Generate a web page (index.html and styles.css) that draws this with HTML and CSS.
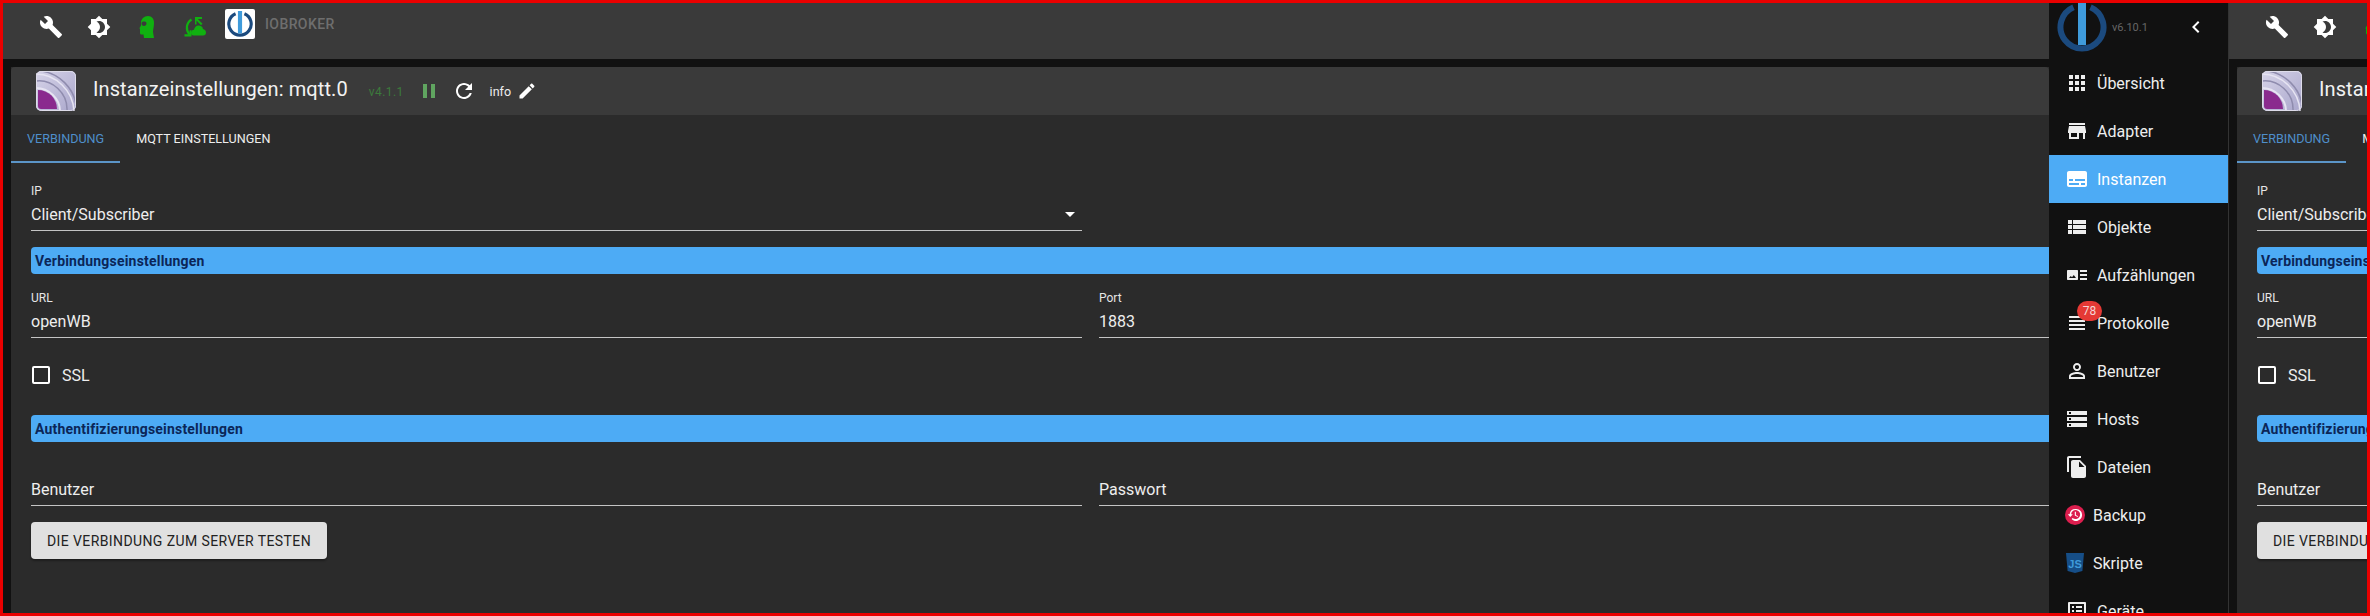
FILE: index.html
```html
<!DOCTYPE html>
<html lang="de">
<head>
    <meta charset="UTF-8">
    <meta name="viewport" content="width=device-width, initial-scale=1.0">
    <link rel="stylesheet" href="styles.css">
    <title>Instanzeinstellungen: mqtt.0</title>
</head>
<body>
  <svg class="sprite" aria-hidden="true">
    <defs>
      <linearGradient id="g-adapter" x1="0" y1="0" x2="1" y2="1">
        <stop offset="0" stop-color="#d6d3e8"/>
        <stop offset="1" stop-color="#aaa7cc"/>
      </linearGradient>
    </defs>
    <symbol id="i-build" viewBox="0 0 24 24"><path d="M22.7 19l-9.1-9.1c.9-2.3.4-5-1.5-6.9-2-2-5-2.4-7.4-1.3L9 6 6 9 1.6 4.7C.4 7.1.9 10.1 2.9 12.1c1.9 1.9 4.6 2.4 6.9 1.5l9.1 9.1c.4.4 1 .4 1.4 0l2.3-2.3c.5-.4.5-1.1.1-1.4z"/></symbol>
    <symbol id="i-theme" viewBox="0 0 24 24"><path d="M20 8.69V4h-4.69L12 .69 8.69 4H4v4.69L.69 12 4 15.31V20h4.69L12 23.31 15.31 20H20v-4.69L23.31 12 20 8.69zM12 18c-.89 0-1.74-.2-2.5-.55C11.56 16.5 13 14.42 13 12s-1.44-4.5-3.5-5.45C10.26 6.2 11.11 6 12 6c3.31 0 6 2.69 6 6s-2.69 6-6 6z"/></symbol>
    <symbol id="i-head" viewBox="0 0 24 24"><path fill-rule="evenodd" d="M13 1c4 0 6 3 6 7 0 4-1 6-1 9l1 6H9l-.5-3.5H6.500c-1 0-1.500-.7-1.500-1.500v-3.500L4.500 13 6 10.500V8c0-4 3-7 7-7zM6.500 8.500c0 1.500 1 2.500 2.500 2.500s2.500-1 2.500-2.500-1-2-2.500-2-2.500.5-2.500 2z"/></symbol>
    <symbol id="i-expert" viewBox="0 0 24 24">
      <path d="M8.500 4.500C3 8 2.500 15 6.500 19.500" fill="none" stroke="currentColor" stroke-width="2.200"/>
      <path d="M1.500 21.500h7v-6.500l-2 .5v3.800H1.500zM12 2h7v2h-4.200l4.700 4.700-1.500 1.500L13.500 5.500V9.500H12z"/>
      <path d="M15.500 10.500c2.500 0 4.300 1.500 4.500 3.500 1.700.4 3 1.700 3 3.500 0 1.700-1 3-3 3H10.500c-1.500 0-2.500-1.200-2.500-2.700 0-1.500 1.200-2.800 3-3 .3-2.300 2.200-4.300 4.500-4.300z"/>
    </symbol>
    <symbol id="i-pause" viewBox="0 0 24 24"><path d="M6 19h4V5H6v14zm8-14v14h4V5h-4z"/></symbol>
    <symbol id="i-refresh" viewBox="0 0 24 24"><path d="M17.65 6.35C16.2 4.9 14.21 4 12 4c-4.42 0-7.99 3.58-7.99 8s3.57 8 7.99 8c3.73 0 6.84-2.55 7.73-6h-2.08c-.82 2.33-3.04 4-5.65 4-3.31 0-6-2.69-6-6s2.69-6 6-6c1.66 0 3.14.69 4.22 1.78L13 11h7V4l-2.35 2.35z"/></symbol>
    <symbol id="i-edit" viewBox="0 0 24 24"><path d="M3 17.25V21h3.75L17.81 9.94l-3.75-3.75L3 17.25zM20.71 7.04c.39-.39.39-1.02 0-1.41l-2.34-2.34c-.39-.39-1.02-.39-1.41 0l-1.83 1.83 3.75 3.750 1.83-1.83z"/></symbol>
    <symbol id="i-drop" viewBox="0 0 24 24"><path d="M7 10l5 5 5-5z"/></symbol>
    <symbol id="i-logo" viewBox="0 0 50 50">
      <path d="M16.500 5.200A21.500 21.500 0 1 0 33.500 5.200" fill="none" stroke="#1b4a7e" stroke-width="6"/>
      <rect x="21" y="0" width="8" height="43" fill="#3f9bdb"/>
    </symbol>
    <symbol id="i-adapter" viewBox="0 0 40 40">
      <rect width="40" height="40" rx="5" fill="url(#g-adapter)"/>
      <path d="M0 10C16 8 32 22 31 40" fill="none" stroke="#8f8cae" stroke-width="1.500"/>
      <path d="M6 0C24 3 37 17 40 33" fill="none" stroke="#8f8cae" stroke-width="1.500"/>
      <path d="M0 3C20 3 37 20 38 40" fill="none" stroke="#e6e4f2" stroke-width="1.500"/>
      <path d="M0 17C13 17 24 28 24 40" fill="none" stroke="#e6e4f2" stroke-width="2"/>
      <path d="M2 19a19 19 0 0 1 19 19H5a3 3 0 0 1-3-3z" fill="#8a2a8e"/>
      <rect x=".500" y=".500" width="39" height="39" rx="5" fill="none" stroke="#dedcea"/>
    </symbol>
  </svg>

  <main class="page">
    <section class="pane">
      <header class="topbar">
        <span class="top-btn"><svg class="icon"><use href="#i-build"/></svg></span>
        <span class="top-btn"><svg class="icon"><use href="#i-theme"/></svg></span>
        <span class="top-btn green"><svg class="icon"><use href="#i-head"/></svg></span>
        <span class="top-btn green"><svg class="icon"><use href="#i-expert"/></svg></span>
        <span class="top-logo"><svg class="top-logo-img"><use href="#i-logo"/></svg></span>
        <span class="top-name">IOBROKER</span>
      </header>
      <div class="panel">
        <div class="panel-head">
          <svg class="adapter-icon"><use href="#i-adapter"/></svg>
          <h1 class="title">Instanzeinstellungen: mqtt.0</h1>
          <span class="version">v4.1.1</span>
          <svg class="icon pause"><use href="#i-pause"/></svg>
          <svg class="icon refresh"><use href="#i-refresh"/></svg>
          <span class="info">info</span>
          <svg class="icon edit"><use href="#i-edit"/></svg>
        </div>
        <div class="tabs">
          <span class="tab active">Verbindung</span>
          <span class="tab">MQTT Einstellungen</span>
        </div>
        <form class="form">
          <div class="cols">
            <div class="field">
              <label class="field-label">IP</label>
              <div class="field-value">Client/Subscriber<svg class="icon drop"><use href="#i-drop"/></svg></div>
            </div>
          </div>
          <div class="bar bar-first">Verbindungseinstellungen</div>
          <div class="cols cols-after">
            <div class="field">
              <label class="field-label">URL</label>
              <div class="field-value">openWB</div>
            </div>
            <div class="field">
              <label class="field-label">Port</label>
              <div class="field-value">1883</div>
            </div>
          </div>
          <div class="check-row"><span class="checkbox"></span>SSL</div>
          <div class="bar bar-auth">Authentifizierungseinstellungen</div>
          <div class="cols cols-after">
            <div class="field">
              <label class="field-label"></label>
              <div class="field-value">Benutzer</div>
            </div>
            <div class="field">
              <label class="field-label"></label>
              <div class="field-value">Passwort</div>
            </div>
          </div>
          <button class="test-btn" type="button">Die Verbindung zum Server testen</button>
        </form>
      </div>
    </section>

    <nav class="sidebar">
      <div class="side-head">
        <svg class="side-logo"><use href="#i-logo"/></svg>
        <span class="side-version">v6.10.1</span>
        <svg class="icon side-back" viewBox="0 0 24 24"><path d="M15.410 7.410L14 6l-6 6 6 6 1.410-1.410L10.830 12z"/></svg>
      </div>
      <a class="item"><svg class="icon" viewBox="0 0 24 24"><path d="M4 8h4V4H4v4zm6 12h4v-4h-4v4zm-6 0h4v-4H4v4zm0-6h4v-4H4v4zm6 0h4v-4h-4v4zm6-10v4h4V4h-4zm-6 4h4V4h-4v4zm6 6h4v-4h-4v4zm0 6h4v-4h-4v4z"/></svg>Übersicht</a>
      <a class="item"><svg class="icon" viewBox="0 0 24 24"><path d="M20 4H4v2h16V4zm1 10v-2l-1-5H4l-1 5v2h1v6h10v-6h4v6h2v-6h1zm-9 4H6v-4h6v4z"/></svg>Adapter</a>
      <a class="item active"><svg class="icon" viewBox="0 0 24 24"><path d="M20 4H4c-1.100 0-2 .9-2 2v12c0 1.100.9 2 2 2h16c1.100 0 2-.9 2-2V6c0-1.100-.9-2-2-2zM4 12h4v2H4v-2zm10 6H4v-2h10v2zm6 0h-4v-2h4v2zm0-4H10v-2h10v2z"/></svg>Instanzen</a>
      <a class="item"><svg class="icon" viewBox="0 0 24 24"><path d="M3 14h4v-4H3v4zm0 5h4v-4H3v4zM3 9h4V5H3v4zm5 5h13v-4H8v4zm0 5h13v-4H8v4zM8 5v4h13V5H8z"/></svg>Objekte</a>
      <a class="item"><svg class="icon" viewBox="0 0 24 24"><path fill-rule="evenodd" d="M3 7h9c.6 0 1 .4 1 1v8c0 .6-.4 1-1 1H3c-.6 0-1-.4-1-1V8c0-.6.4-1 1-1zm1 8h7l-2.200-3-1.800 2.200L5.800 13zM15 7h7v2h-7zm0 4h7v2h-7zm0 4h7v2h-7z"/></svg>Aufzählungen</a>
      <a class="item"><svg class="icon" viewBox="0 0 24 24"><path d="M4 15h16v-2H4v2zm0 4h16v-2H4v2zm0-8h16V9H4v2zm0-6v2h16V5H4z"/></svg>Protokolle<span class="badge">78</span></a>
      <a class="item"><svg class="icon" viewBox="0 0 24 24"><path d="M12 5.900c1.160 0 2.100.94 2.100 2.100s-.94 2.100-2.100 2.100S9.900 9.160 9.900 8s.94-2.100 2.100-2.100m0 9c2.970 0 6.100 1.460 6.100 2.100v1.100H5.900V17c0-.64 3.130-2.100 6.100-2.100M12 4C9.790 4 8 5.790 8 8s1.790 4 4 4 4-1.790 4-4-1.790-4-4-4zm0 9c-2.670 0-8 1.340-8 4v3h16v-3c0-2.660-5.330-4-8-4z"/></svg>Benutzer</a>
      <a class="item"><svg class="icon" viewBox="0 0 24 24"><path d="M2 20h20v-4H2v4zm2-3h2v2H4v-2zM2 4v4h20V4H2zm4 3H4V5h2v2zm-4 7h20v-4H2v4zm2-3h2v2H4v-2z"/></svg>Hosts</a>
      <a class="item"><svg class="icon" viewBox="0 0 24 24"><path d="M16 1H4c-1.100 0-2 .9-2 2v14h2V3h12V1zm-1 4l6 6v10c0 1.100-.9 2-2 2H7.990C6.890 23 6 22.100 6 21l.01-14c0-1.100.89-2 1.990-2h7zm-1 7h5.500L14 6.500V12z"/></svg>Dateien</a>
      <a class="item">
        <svg class="icon-small" viewBox="0 0 20 20"><circle cx="10" cy="10" r="10" fill="#dc1e4e"/><path d="M10.500 4A6 6 0 0 0 4.600 9.200H2.800l2.500 2.800 2.500-2.800H6.100a4.500 4.500 0 1 1 1.500 3.700l-1 1.100A6 6 0 1 0 10.500 4z" fill="#fff"/><path d="M9.800 6.800v3.700l2.800 1.600.5-.9-2.200-1.300V6.800z" fill="#fff"/></svg>Backup</a>
      <a class="item">
        <svg class="icon-small" viewBox="0 0 20 20"><path d="M1 0h18l-1.600 18L10 20l-7.400-2z" fill="#164e87"/><text class="js-mark" x="10" y="14.500">JS</text></svg>Skripte</a>
      <a class="item"><svg class="icon" viewBox="0 0 24 24"><path d="M19 5v14H5V5h14m1.100-2H3.900c-.5 0-.9.4-.9.9v16.200c0 .4.4.9.9.9h16.200c.4 0 .9-.5.9-.9V3.900c0-.5-.5-.9-.9-.9zM11 7h6v2h-6V7zm0 4h6v2h-6v-2zm0 4h6v2h-6zM7 7h2v2H7zm0 4h2v2H7zm0 4h2v2H7z"/></svg>Geräte</a>
    </nav>

    <!-- same settings page again, behind the menu -->
    <section class="pane pane-second">
      <header class="topbar">
        <span class="top-btn"><svg class="icon"><use href="#i-build"/></svg></span>
        <span class="top-btn"><svg class="icon"><use href="#i-theme"/></svg></span>
        <span class="top-btn green"><svg class="icon"><use href="#i-head"/></svg></span>
        <span class="top-btn green"><svg class="icon"><use href="#i-expert"/></svg></span>
      </header>
      <div class="panel">
        <div class="panel-head">
          <svg class="adapter-icon"><use href="#i-adapter"/></svg>
          <h2 class="title">Instanzeinstellungen: mqtt.0</h2>
        </div>
        <div class="tabs">
          <span class="tab active">Verbindung</span>
          <span class="tab">MQTT Einstellungen</span>
        </div>
        <form class="form">
          <div class="cols">
            <div class="field">
              <label class="field-label">IP</label>
              <div class="field-value">Client/Subscriber</div>
            </div>
          </div>
          <div class="bar bar-first">Verbindungseinstellungen</div>
          <div class="cols cols-after">
            <div class="field">
              <label class="field-label">URL</label>
              <div class="field-value">openWB</div>
            </div>
          </div>
          <div class="check-row"><span class="checkbox"></span>SSL</div>
          <div class="bar bar-auth">Authentifizierungseinstellungen</div>
          <div class="cols cols-after">
            <div class="field">
              <label class="field-label"></label>
              <div class="field-value">Benutzer</div>
            </div>
          </div>
          <button class="test-btn" type="button">Die Verbindung zum Server testen</button>
        </form>
      </div>
    </section>
  </main>
  <div class="frame"></div>
</body>
</html>
```

FILE: styles.css
```css
* {
  box-sizing: border-box;
}

html, body {
  height: 100%;
  margin: 0;
  overflow: hidden;
}

body {
  background: #111;
  color: #eee;
  font-family: Roboto, "Liberation Sans", sans-serif;
}

.sprite {
  position: absolute;
  width: 0;
  height: 0;
}

.icon {
  display: block;
  flex: none;
  width: 24px;
  height: 24px;
  fill: currentColor;
}

.page {
  display: flex;
  height: 100%;
}

.frame {
  position: fixed;
  inset: 0;
  border: 3px solid #ea0000;
  pointer-events: none;
  z-index: 5;
}

.pane {
  flex: none;
  width: 2049px;
  background: #111;
}

.pane-second {
  margin-left: -3px;
}

/* top bar */
.topbar {
  display: flex;
  align-items: flex-start;
  height: 59px;
  padding: 3px 0 0 27px;
  background: #3a3a3a;
}

.top-btn {
  display: flex;
  align-items: center;
  justify-content: center;
  width: 48px;
  height: 48px;
  color: #fff;
}

.top-btn.green {
  color: #10b010;
}

.top-logo {
  display: flex;
  align-items: center;
  justify-content: center;
  width: 30px;
  height: 30px;
  margin: 6px 10px 0 6px;
  background: #fff;
  border-radius: 2px;
}

.top-logo-img {
  width: 26px;
  height: 26px;
}

.top-name {
  margin-top: 12px;
  font-size: 14px;
  font-weight: 500;
  line-height: 18px;
  letter-spacing: .4px;
  color: #6e6e6e;
}

/* settings panel */
.panel {
  width: 2038px;
  margin: 8px 0 0 11px;
  height: 557px;
  background: #2b2b2b;
}

.panel-head {
  display: flex;
  align-items: center;
  height: 48px;
  padding-left: 25px;
  background: #3a3a3a;
  border-radius: 4px 4px 0 0;
}

.adapter-icon {
  flex: none;
  width: 40px;
  height: 40px;
}

.title {
  margin: 0 0 4px 17px;
  font-size: 20px;
  font-weight: 400;
  letter-spacing: .1px;
  color: #f2f2f2;
}

.version {
  margin: 2px 0 0 21px;
  font-size: 12px;
  letter-spacing: .4px;
  color: #3c7a3c;
}

.pause {
  margin: 0 11px 0 13px;
  color: #60a560;
}

.refresh {
  color: #fff;
}

.info {
  margin-left: 14px;
  font-size: 12.5px;
  color: #eee;
}

.edit {
  width: 20px;
  height: 20px;
  margin-left: 6px;
  color: #fff;
}

.tabs {
  display: flex;
  height: 48px;
}

.tab {
  padding: 0 16px 2px;
  font-size: 12.6px;
  font-weight: 400;
  line-height: 48px;
  text-transform: uppercase;
  color: #eee;
}

.tab.active {
  color: #4f8fcb;
  border-bottom: 2px solid #5b95c8;
  padding-bottom: 0;
}

/* form */
.form {
  padding: 21px 0 0 20px;
}

.cols {
  display: grid;
  grid-template-columns: 1051px 1fr;
  column-gap: 17px;
}

.cols-after {
  margin-top: 17px;
}

.field {
  height: 47px;
  border-bottom: 1px solid #c4c4c4;
}

.field-label {
  display: block;
  height: 12px;
  margin-bottom: 6px;
  font-size: 12px;
  line-height: 14px;
  color: #e6e6e6;
}

.field-value {
  display: flex;
  align-items: center;
  justify-content: space-between;
  height: 24px;
  font-size: 16px;
  line-height: 25px;
  color: #eee;
}

.drop {
  color: #fff;
}

.bar {
  height: 27px;
  padding-left: 4px;
  background: #4dabf5;
  border-radius: 4px 0 0 4px;
  font-size: 14px;
  font-weight: 700;
  line-height: 28px;
  letter-spacing: .2px;
  color: #0b2658;
}

.bar-first {
  margin-top: 16px;
}

.bar-auth {
  margin-top: 31px;
}

.check-row {
  display: flex;
  align-items: center;
  gap: 12px;
  height: 18px;
  margin: 28px 0 0 1px;
  font-size: 16px;
  color: #eee;
}

.checkbox {
  width: 18px;
  height: 18px;
  border: 2px solid #fff;
  border-radius: 2px;
}

.test-btn {
  display: block;
  width: 296px;
  height: 37px;
  margin-top: 16px;
  padding: 0;
  border: 0;
  border-radius: 4px;
  background: #e0e0e0;
  box-shadow: 0 2px 2px rgba(0, 0, 0, .3);
  font-family: inherit;
  font-size: 14px;
  font-weight: 400;
  letter-spacing: .4px;
  text-transform: uppercase;
  color: #222;
}

/* menu */
.sidebar {
  position: relative;
  z-index: 2;
  flex: none;
  width: 180px;
  height: 100%;
  background: #111;
  border-right: 1px solid #333;
  overflow: hidden;
}

.side-head {
  display: flex;
  align-items: center;
  height: 59px;
  padding: 0 0 5px 8px;
}

.side-logo {
  flex: none;
  width: 50px;
  height: 50px;
}

.side-version {
  margin-left: 5px;
  font-size: 11px;
  color: #666;
}

.side-back {
  margin-left: 36px;
  color: #fff;
}

.item {
  position: relative;
  display: flex;
  align-items: center;
  gap: 8px;
  height: 48px;
  padding-left: 16px;
  font-size: 16px;
  color: #eee;
}

.item.active {
  background: #4dabf5;
  color: #fff;
}

.icon-small {
  flex: none;
  width: 20px;
  height: 20px;
}

.js-mark {
  font-family: "Liberation Sans", sans-serif;
  font-size: 11px;
  font-weight: 700;
  text-anchor: middle;
  fill: #3f9bdb;
}

.badge {
  position: absolute;
  top: 2px;
  left: 28px;
  width: 25px;
  height: 20px;
  border-radius: 10px;
  background: #e53935;
  font-size: 12px;
  line-height: 20px;
  text-align: center;
  color: #f5d5d5;
}
```
